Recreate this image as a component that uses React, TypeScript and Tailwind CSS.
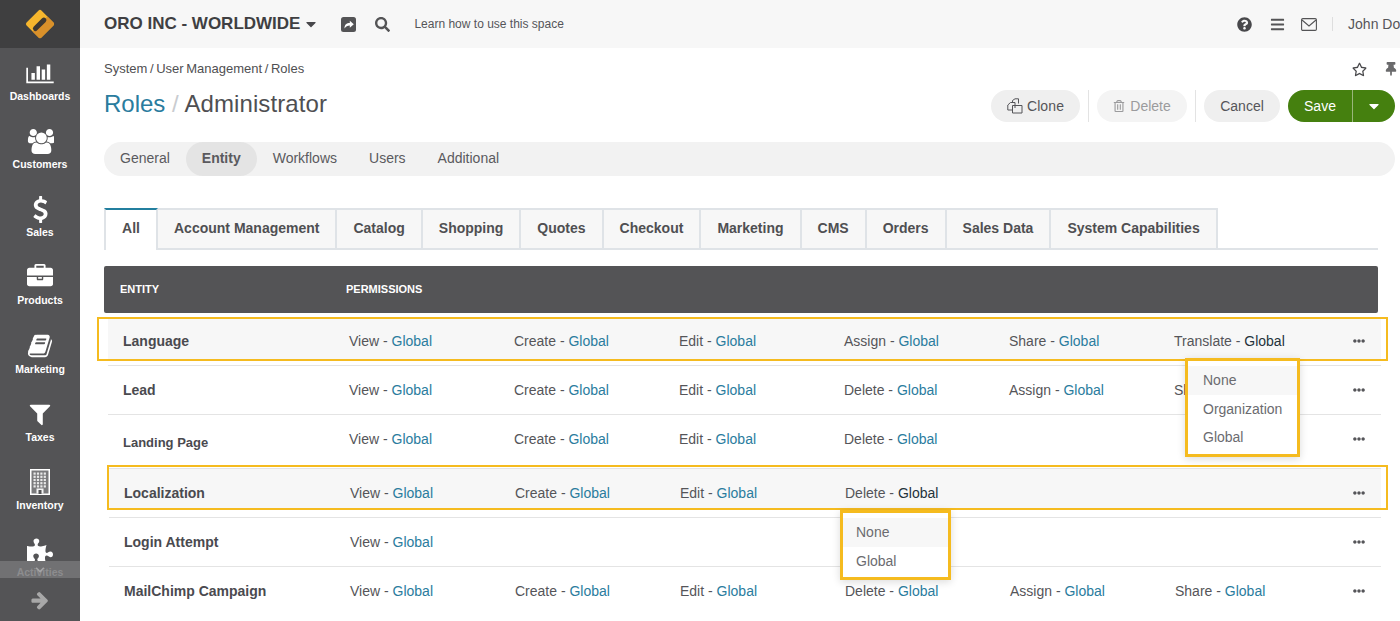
import React from "react";
import {
  FaPuzzlePiece, FaSearch, FaQuestionCircle, FaBars, FaRegStar, FaThumbtack,
  FaRegTrashAlt, FaEllipsisH, FaCaretDown, FaChevronDown,
} from "react-icons/fa";

const P = ({ d, vb, w, h, className }: { d: string; vb: string; w: number; h: number; className?: string }) => (
  <svg width={w} height={h} viewBox={vb} fill="currentColor" className={className}><path d={d} /></svg>
);

const Chart = () => <P w={28} h={24} vb="0 0 2048 1792" d="M640 896v512h-256v-512h256zm384-512v1024h-256v-1024h256zm1024 1152v128h-2048v-1152h128v1024h1920zm-640-896v768h-256v-768h256zm384-384v1152h-256v-1152h256z" />;
const Users = () => <P w={27} h={27} vb="0 0 1920 1792" d="M657 896q-162 5-265 128h-134q-82 0-138-40.500t-56-118.500q0-353 124-353 6 0 43.500 21t97.500 42.500 119 21.500q67 0 133-23-5 37-5 66 0 139 81 256zm1071 637q0 120-73 189.500t-194 69.500h-874q-121 0-194-69.500t-73-189.500q0-53 3.500-103.500t14-109 26.500-108.500 43-97.500 62-81 85.500-53.500 111.500-20q10 0 43 21.500t73 48 107 48 135 21.500 135-21.500 107-48 73-48 43-21.500q61 0 111.500 20t85.500 53.500 62 81 43 97.500 26.500 108.500 14 109 3.500 103.500zm-1024-1277q0 106-75 181t-181 75-181-75-75-181 75-181 181-75 181 75 75 181zm704 384q0 159-112.500 271.500t-271.500 112.500-271.500-112.500-112.500-271.500 112.500-271.500 271.500-112.500 271.500 112.500 112.500 271.500zm576 225q0 78-56 118.500t-138 40.500h-134q-103-123-265-128 81-117 81-256 0-29-5-66 66 23 133 23 59 0 119-21.500t97.500-42.500 43.500-21q124 0 124 353zm-128-609q0 106-75 181t-181 75-181-75-75-181 75-181 181-75 181 75 75 181z" />;
const Dollar = () => <P w={27} h={27} vb="0 0 1792 1792" d="M1362 1185q0 153-99.500 263.500t-258.500 136.500v175q0 14-9 23t-23 9h-135q-13 0-22.500-9.500t-9.500-22.500v-175q-66-9-127.500-31t-101.500-44.500-74-48-46.500-37.500-17.500-18q-17-21-2-41l103-135q7-10 23-12 15-2 24 9l2 2q113 99 243 125 37 8 74 8 81 0 142.500-43t61.500-122q0-28-15-53t-33.500-42-58.500-37.500-66-32-80-32.500q-39-16-61.500-25t-61.500-26.500-62.500-31-56.500-35.500-53.500-42.500-43.500-49-35.500-58-21-66.500-8.500-78q0-138 98-242t255-134v-180q0-13 9.500-22.500t22.500-9.500h135q14 0 23 9t9 23v176q57 6 110.500 23t87 33.500 63.500 37.500 39 29 15 14q17 18 5 38l-81 146q-8 15-23 16-14 3-27-7-3-3-14.500-12t-39-26.500-58.500-32-74.500-26-85.500-11.500q-95 0-155 43t-60 111q0 26 8.500 48t29.500 41.500 39.500 33 56 31 60.500 27 70 27.500q53 20 81 31.500t76 35 75.500 42.500 62 50 53 63.500 31.500 76.500 13 94z" />;
const Case = () => <P w={26} h={26} vb="0 0 1792 1792" d="M640 256h512v-128h-512v128zm1152 640v480q0 66-47 113t-113 47h-1472q-66 0-113-47t-47-113v-480h672v160q0 26 19 45t45 19h320q26 0 45-19t19-45v-160h672zm-768 0v128h-256v-128h256zm768-480v384h-1792v-384q0-66 47-113t113-47h352v-160q0-40 28-68t68-28h576q40 0 68 28t28 68v160h352q66 0 113 47t47 113z" />;
const Book = () => <P w={26} h={26} vb="0 0 1792 1792" d="M1703 478q40 57 18 129l-275 906q-19 64-76.500 107.500t-122.500 43.500h-923q-77 0-148.500-53.500t-99.500-131.500q-24-67-2-127 0-4 3-27t4-37q1-8-3-21.500t-3-19.500q2-11 8-21t16.500-23.500 16.500-23.500q23-38 45-91.500t30-91.500q3-10 .5-30t-.5-28q3-11 17-28t17-23q21-36 42-92t25-90q1-9-2.500-32t.5-28q4-13 22-30.500t22-22.500q19-26 42.500-84.500t27.500-96.500q1-8-3-25.500t-2-26.500q2-8 9-18t18-23 17-21q8-12 16.500-30.500t15-35 16-36 19.500-32 26.500-23.500 36-11.500 47.500 5.500l-1 3q38-9 51-9h761q74 0 114 56t18 130l-274 906q-36 119-71.500 153.500t-128.500 34.500h-869q-27 0-38 15-11 16-1 43 24 70 144 70h923q29 0 56-15.500t35-41.500l300-987q7-22 5-57 38 15 59 43zm-1064 2q-4 13 2 22.500t20 9.500h608q13 0 25.500-9.500t16.500-22.500l21-64q4-13-2-22.500t-20-9.500h-608q-13 0-25.500 9.500t-16.500 22.500zm-83 256q-4 13 2 22.500t20 9.500h608q13 0 25.500-9.500t16.500-22.500l21-64q4-13-2-22.500t-20-9.500h-608q-13 0-25.500 9.500t-16.500 22.500z" />;
const Filter = () => <P w={26} h={26} vb="0 0 1792 1792" d="M1595 295q17 41-14 70l-493 493v742q0 42-39 59-13 5-25 5-27 0-45-19l-256-256q-19-19-19-45v-486l-493-493q-31-29-14-70 17-39 59-39h1280q42 0 59 39z" />;
const Building = () => (
  <svg width="20" height="26" viewBox="0 0 20 26">
    <rect x="0.750" y="0.750" width="18.500" height="24.500" fill="#7a7a7c" stroke="#fff" strokeWidth="1.500" />
    {[0, 1, 2, 3, 4].map((r) =>
      [0, 1, 2, 3].map((c) => <rect key={`${r}-${c}`} x={3.5 + c * 3.4} y={3.5 + r * 3.2} width="2.200" height="2.200" fill="#e9e9e9" />)
    )}
    <rect x="6.500" y="19.500" width="7" height="5" fill="#f4f4f4" />
    <rect x="8.500" y="21" width="3" height="4" fill="#545456" />
  </svg>
);
const Puzzle = () => <FaPuzzlePiece size={26} />;
const Arrow = () => <P w={20} h={20} vb="0 0 1792 1792" d="M1600 960q0 54-37 91l-651 651q-39 37-91 37-51 0-90-37l-75-75q-38-38-38-91t38-91l293-293h-704q-52 0-84.500-37.500t-32.500-90.500v-128q0-53 32.500-90.500t84.500-37.500h704l-293-294q-38-36-38-90t38-90l75-75q38-38 90-38 53 0 91 38l651 651q37 35 37 90z" />;

const nav = [
  { label: "Dashboards", Icon: Chart },
  { label: "Customers", Icon: Users },
  { label: "Sales", Icon: Dollar },
  { label: "Products", Icon: Case },
  { label: "Marketing", Icon: Book },
  { label: "Taxes", Icon: Filter },
  { label: "Inventory", Icon: Building },
  { label: "Activities", Icon: Puzzle },
];

const tabs = ["Account Management", "Catalog", "Shopping", "Quotes", "Checkout", "Marketing", "CMS", "Orders", "Sales Data", "System Capabilities"];

type Row = { name: string; perms: string[]; cls: string; inner: string; nameCls?: string; dark?: number };
const rows: Row[] = [
  { name: "Language", perms: ["View", "Create", "Edit", "Assign", "Share", "Translate"], cls: "border-b border-[#e4e4e4] h-[49px]", inner: "h-[44px] pt-[4px] mt-px bg-[#f7f7f7]", dark: 5 },
  { name: "Lead", perms: ["View", "Create", "Edit", "Delete", "Assign", "Share"], cls: "border-b border-[#e4e4e4] h-[49px]", inner: "h-[48px]" },
  { name: "Landing Page", perms: ["View", "Create", "Edit", "Delete"], cls: "h-[48px]", inner: "h-[48px]", nameCls: "text-[13px] pt-[7px]" },
  { name: "Localization", perms: ["View", "Create", "Edit", "Delete"], cls: "mt-[5px] ml-px border-y border-[#e4e4e4] h-[50px]", inner: "h-[41px] pt-[7px] bg-[#f7f7f7]", dark: 3 },
  { name: "Login Attempt", perms: ["View"], cls: "ml-px border-b border-[#e4e4e4] h-[49px]", inner: "h-[48px]" },
  { name: "MailChimp Campaign", perms: ["View", "Create", "Edit", "Delete", "Assign", "Share"], cls: "ml-px h-[49px]", inner: "h-[48px]" },
];

function PermRow({ row }: { row: Row }) {
  return (
    <div className={row.cls}>
      <div className={`grid grid-cols-[241px_165px_165px_165px_165px_165px_165px_1fr] items-center text-[14px] text-[#555559] ${row.inner}`}>
        <div className={`pl-[15px] font-bold text-[#4a4a4f] ${row.nameCls ?? ""}`}>{row.name}</div>
        {[0, 1, 2, 3, 4, 5].map((i) => (
          <div key={i} className="whitespace-nowrap">
            {row.perms[i] && (
              <>
                {row.perms[i]} - <span className={row.dark === i ? "text-[#24333b]" : "text-[#2a7c9e]"}>Global</span>
              </>
            )}
          </div>
        ))}
        <div className="flex justify-end pr-[16px] text-[#555559]">
          <FaEllipsisH size={12} />
        </div>
      </div>
    </div>
  );
}

function Menu({ items, className, pad }: { items: string[]; className: string; pad: string }) {
  return (
    <div className={`absolute bg-white border-[3px] border-[#f5bb1f] shadow-[0_2px_8px_rgba(0,0,0,0.14)] pt-[5px] text-[14px] text-[#6b6b6f] ${className}`}>
      {items.map((t, i) => (
        <div key={t} className={`h-[28.700px] flex items-center ${pad} ${i === 0 ? "bg-[#f7f7f7]" : ""}`}>{t}</div>
      ))}
    </div>
  );
}

export default function App() {
  return (
    <div className="relative flex w-[1400px] h-[621px] overflow-hidden bg-white font-['Liberation_Sans',Arial,sans-serif] text-[#555559]">
      <aside className="relative w-[80px] shrink-0 bg-[#545456] text-white overflow-hidden">
        <div className="h-[48px] bg-[#3f3f40] flex items-center justify-center">
          <svg width="32" height="32" viewBox="0 0 32 32">
            <g transform="rotate(45 16 16)">
              <rect x="5.500" y="5.500" width="21" height="21" rx="2" fill="#f6b62d" />
              <path d="M16 5.500 h8.500 a2 2 0 0 1 2 2 v17 a2 2 0 0 1 -2 2 h-8.500 z" fill="#d9902a" />
              <rect x="13.500" y="8" width="5" height="17" rx="2.500" fill="#3d3832" />
            </g>
          </svg>
        </div>
        {nav.map(({ label, Icon }) => (
          <div key={label} className="h-[68.140px] flex flex-col items-center">
            <div className="h-[40px] pt-[10px] flex items-center justify-center">
              <Icon />
            </div>
            <div className="mt-[2px] text-[10.500px] font-bold leading-[13px]">{label}</div>
          </div>
        ))}
        <div className="absolute left-0 right-0 top-[561px] h-[17px] bg-[#717173] flex items-start justify-center text-[#a3a3a5]">
          <span className="absolute left-0 right-0 top-[5px] text-center text-[10.500px] font-bold text-[#8c8c8e] leading-[13px]">Activities</span>
          <FaChevronDown size={10} className="relative mt-[4px]" />
        </div>
        <div className="absolute left-0 right-0 top-[578px] h-[43px] bg-[#545456] flex items-center justify-center text-[#a8a8a8]">
          <Arrow />
        </div>
      </aside>

      <div className="flex-1 min-w-0">
        <header className="h-[48px] bg-[#f7f7f7] flex items-center pl-[24px]">
          <span className="text-[17px] font-bold text-[#3f3f42] whitespace-nowrap">ORO INC - WORLDWIDE</span>
          <FaCaretDown size={16} className="ml-[3px] text-[#48484b]" />
          <svg width="15" height="15" viewBox="0 0 15 15" className="ml-[22px]">
            <rect width="15" height="15" rx="2.500" fill="#545456" />
            <path d="M3.500 11.500 C3.500 7.500 5.500 6 8.800 6 V3.800 L12.800 7.300 L8.800 10.800 V8.400 C6.500 8.400 4.800 9.200 3.500 11.500 z" fill="#fff" />
          </svg>
          <FaSearch size={15} className="ml-[19px] text-[#545456]" />
          <span className="ml-[24px] text-[12px] text-[#555559] whitespace-nowrap">Learn how to use this space</span>
          <div className="ml-auto mr-[-8px] flex items-center shrink-0">
            <FaQuestionCircle size={15} className="text-[#48484b]" />
            <FaBars size={15} className="ml-[18px] text-[#545456]" />
            <svg width="16" height="13" viewBox="0 0 16 13" fill="none" stroke="#545456" strokeWidth="1.100" className="ml-[16px]">
              <rect x="0.600" y="0.600" width="14.800" height="11.800" rx="1.200" />
              <path d="M1 2 L8 8 L15 2" />
            </svg>
            <span className="ml-[15px] mr-[15px] w-px h-[14px] bg-[#dedede]" />
            <span className="text-[14px] whitespace-nowrap">John Doe</span>
          </div>
        </header>

        <main className="pl-[24px] pr-[5px]">
          <div className="flex items-center h-[20px] mt-[11px] text-[13px]">
            <span className="whitespace-nowrap text-[#4f4f52] [word-spacing:-1px]">System / User Management / Roles</span>
            <FaRegStar size={15} className="ml-auto text-[#48484b]" />
            <FaThumbtack size={14} className="ml-[17px] mr-[-3px] text-[#6a6a6c]" />
          </div>
          <div className="flex items-center mt-[9px] h-[32px]">
            <h1 className="text-[24px] whitespace-nowrap">
              <span className="text-[#2a7c9e]">Roles</span>
              <span className="text-[#c9ccd0] mr-[-1px]"> / </span>
              <span className="text-[#4f4f52] tracking-[0.1px]">Administrator</span>
            </h1>
            <div className="ml-auto mt-[4px] flex items-center text-[14px]">
              <button className="h-[32px] w-[89px] rounded-full bg-[#efefef] text-[#555559] flex items-center justify-center gap-[4px]">
                <svg width="16" height="16" viewBox="0 0 16 16" fill="none" stroke="#555559" strokeWidth="1">
                  <path d="M5.500 5 L5.500 2.500 L8 0.800 H11.500 V5.500" />
                  <path d="M0.800 7 L3.500 4.500 H8 V10 M0.800 7 V12 H5.500" />
                  <path d="M5.500 7.500 H15 V15 H5.500 z" />
                </svg>
                <span className="tracking-[0.1px]">Clone</span>
              </button>
              <span className="w-px h-[32px] bg-[#e3e3e3] mx-[8px]" />
              <button className="h-[32px] w-[90px] rounded-full bg-[#f4f4f4] text-[#9b9b9d] flex items-center justify-center gap-[5px]">
                <FaRegTrashAlt size={12} /> Delete
              </button>
              <span className="w-px h-[32px] bg-[#e3e3e3] mx-[8px]" />
              <button className="h-[32px] w-[76px] rounded-full bg-[#efefef] text-[#555559]">Cancel</button>
              <div className="ml-[8px] h-[32px] flex rounded-full bg-[#45800f] text-white overflow-hidden">
                <span className="w-[65px] flex items-center justify-center border-r border-[#9ab67c]">Save</span>
                <span className="w-[42px] flex items-center justify-center"><FaCaretDown size={16} /></span>
              </div>
            </div>
          </div>

          <nav className="mt-[22px] h-[34px] rounded-full bg-[#f2f2f2] flex items-center text-[14px] text-[#5a5a5e] pb-[1px]">
            <span className="px-[16px]">General</span>
            <span className="h-[34px] mb-[-1px] px-[16px] rounded-full bg-[#e4e4e4] font-bold flex items-center pb-[1px]">Entity</span>
            <span className="px-[16px]">Workflows</span>
            <span className="px-[16px]">Users</span>
            <span className="px-[16px]">Additional</span>
          </nav>

          <div className="mt-[32px] mr-[17px] flex h-[42px] border-b-2 border-[#dfe3e7] text-[14px] font-bold text-[#4f4f52]">
            <div className="h-[42px] w-[54px] border-t-2 border-[#237f9f] border-l-2 border-l-[#dfe3e7] border-r-2 border-r-[#dfe3e7] bg-white flex items-center justify-center pb-[3px]">All</div>
            {tabs.map((t) => (
              <div key={t} className="h-[40px] px-[16px] pb-[1px] border-t-2 border-r-2 border-[#dfe3e7] bg-[#f7f7f7] flex items-center whitespace-nowrap">{t}</div>
            ))}
          </div>

          <div className="mt-[16px] mr-[17px] h-[47px] rounded-[2px] bg-[#545456] text-white text-[11px] font-bold flex items-center">
            <span className="pl-[16px] w-[242px]">ENTITY</span>
            <span>PERMISSIONS</span>
          </div>

          <div className="mt-[4px] ml-[4px] mr-[14px]">
            {rows.map((r) => <PermRow key={r.name} row={r} />)}
          </div>
        </main>
      </div>

      <div className="absolute left-[97px] top-[317px] w-[1291px] h-[44px] border-2 border-[#f5bb1f]" />
      <div className="absolute left-[107px] top-[465px] w-[1281px] h-[45px] border-2 border-[#f5bb1f]" />
      <Menu items={["None", "Organization", "Global"]} pad="pl-[15px]" className="left-[1185px] top-[358px] w-[115px] h-[99px]" />
      <Menu items={["None", "Global"]} pad="pl-[13px]" className="left-[840px] top-[510px] w-[111px] h-[70px]" />
    </div>
  );
}
